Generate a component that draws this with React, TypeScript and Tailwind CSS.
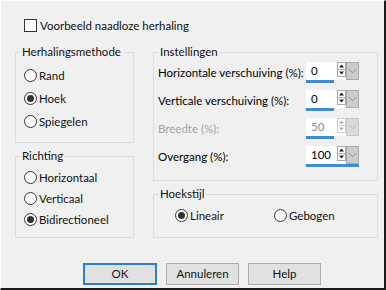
import React from "react";

const font = { fontFamily: 'Lato, "Noto Sans", Arial, sans-serif' };

const Radio = ({ label, checked }: { label: string; checked?: boolean }) => (
  <div className="flex items-center h-[13px]">
    <div className="w-[13px] h-[13px] rounded-full border border-[#333333] bg-white flex items-center justify-center shrink-0">
      {checked && <div className="w-[7px] h-[7px] rounded-full bg-[#333333]"></div>}
    </div>
    <span className="ml-[2px] leading-[16px] whitespace-nowrap">{label}</span>
  </div>
);

const SpinArrows = ({ disabled }: { disabled?: boolean }) => {
  const c = disabled ? "#b0b0b0" : "#1a1a1a";
  return (
    <svg width="9" height="15" viewBox="0 0 9 15">
      <rect x="0.5" y="0.5" width="8" height="14" fill="white" stroke={disabled ? "#cfcfcf" : "#a9a9a9"} />
      <line x1="1" y1="7.5" x2="8" y2="7.5" stroke={disabled ? "#cfcfcf" : "#a9a9a9"} />
      <path d="M4.5 2.5 L7 5.5 L2 5.5 Z" fill={c} />
      <path d="M2 9.5 L7 9.5 L4.5 12.5 Z" fill={c} />
    </svg>
  );
};

const SpinBox = ({
  value,
  bar,
  disabled,
}: {
  value: string;
  bar: number;
  disabled?: boolean;
}) => (
  <div className="w-[53px] flex flex-col">
    <div className="flex h-[18px]">
      <div
        className={
          "w-[31px] bg-white pl-[5px] flex items-center leading-[16px] " +
          (disabled ? "text-[#8a8a8a]" : "text-black")
        }
      >
        {value}
      </div>
      <div className="w-[9px] bg-white flex items-start">
        <SpinArrows disabled={disabled} />
      </div>
      <div
        className={
          "w-[13px] border flex items-center justify-center " +
          (disabled
            ? "bg-[#dadada] border-[#c8c8c8]"
            : "bg-[#cccccc] border-[#a8a8a8]")
        }
      >
        <svg width="9" height="6" viewBox="0 0 9 6">
          <path
            d="M0.5 0.8 L4.5 4.8 L8.5 0.8"
            fill="none"
            stroke={disabled ? "#b8b8b8" : "#8a8a8a"}
            strokeWidth="1"
          />
        </svg>
      </div>
    </div>
    <div className="h-[3px] bg-[#3c8cd9]" style={{ width: bar }}></div>
  </div>
);

const Row = ({
  label,
  value,
  bar,
  disabled,
}: {
  label: string;
  value: string;
  bar: number;
  disabled?: boolean;
}) => (
  <div className="flex items-center justify-between h-[21px]">
    <span
      className={
        "leading-[16px] whitespace-nowrap " +
        (disabled ? "text-[#a3a3a3]" : "text-black")
      }
    >
      {label}
    </span>
    <SpinBox value={value} bar={bar} disabled={disabled} />
  </div>
);

const Group = ({
  title,
  className,
  children,
}: {
  title: string;
  className: string;
  children: React.ReactNode;
}) => (
  <fieldset className={"border border-[#dcdcdc] " + className}>
    <legend className="ml-[4px] px-[2px] leading-[16px]">{title}</legend>
    {children}
  </fieldset>
);

export default function App() {
  return (
    <div
      className="w-[386px] h-[290px] bg-[#f0f0f0] border-t border-l border-white border-r-2 border-b-2 border-r-[#1a1a1a] border-b-[#1a1a1a] flex flex-col text-[11.5px] text-[#111111]"
      style={font}
    >
      <div className="ml-[23px] mt-[18px] flex items-center h-[13px]">
        <div className="w-[13px] h-[13px] border border-[#333333] bg-white shrink-0"></div>
        <span className="ml-[3px] leading-[16px] whitespace-nowrap">
          Voorbeeld naadloze herhaling
        </span>
      </div>

      <div className="flex ml-[14px] mt-[12px] gap-[19px]">
        <div className="w-[119px] flex flex-col gap-[5px]">
          <Group title="Herhalingsmethode" className="h-[99px]">
            <div className="flex flex-col gap-[10px] pl-[8px] mt-[9px]">
              <Radio label="Rand" />
              <Radio label="Hoek" checked />
              <Radio label="Spiegelen" />
            </div>
          </Group>
          <Group title="Richting" className="h-[90px]">
            <div className="flex flex-col gap-[8px] pl-[8px] mt-[7px]">
              <Radio label="Horizontaal" />
              <Radio label="Verticaal" />
              <Radio label="Bidirectioneel" checked />
            </div>
          </Group>
        </div>

        <div className="w-[225px] flex flex-col gap-[5px]">
          <Group title="Instellingen" className="h-[137px]">
            <div className="flex flex-col gap-[7px] pl-[4px] pr-[18px] mt-[2px]">
              <Row label="Horizontale verschuiving (%):" value="0" bar={28} />
              <Row label="Verticale verschuiving (%):" value="0" bar={28} />
              <Row label="Breedte (%):" value="50" bar={28} disabled />
              <Row label="Overgang (%):" value="100" bar={53} />
            </div>
          </Group>
          <Group title="Hoekstijl" className="h-[52px]">
            <div className="flex pl-[21px] mt-[7px]">
              <div className="w-[99px]">
                <Radio label="Lineair" checked />
              </div>
              <Radio label="Gebogen" />
            </div>
          </Group>
        </div>
      </div>

      <div className="flex ml-[82px] mt-[25px] gap-[9px]">
        <button className="w-[74px] h-[22px] border-2 border-[#2a7fd0] bg-[#e1e1e1] leading-[16px]">
          OK
        </button>
        <button className="w-[73px] h-[22px] border border-[#adadad] bg-[#e1e1e1] leading-[16px]">
          Annuleren
        </button>
        <button className="w-[73px] h-[22px] border border-[#adadad] bg-[#e1e1e1] leading-[16px]">
          Help
        </button>
      </div>
    </div>
  );
}
